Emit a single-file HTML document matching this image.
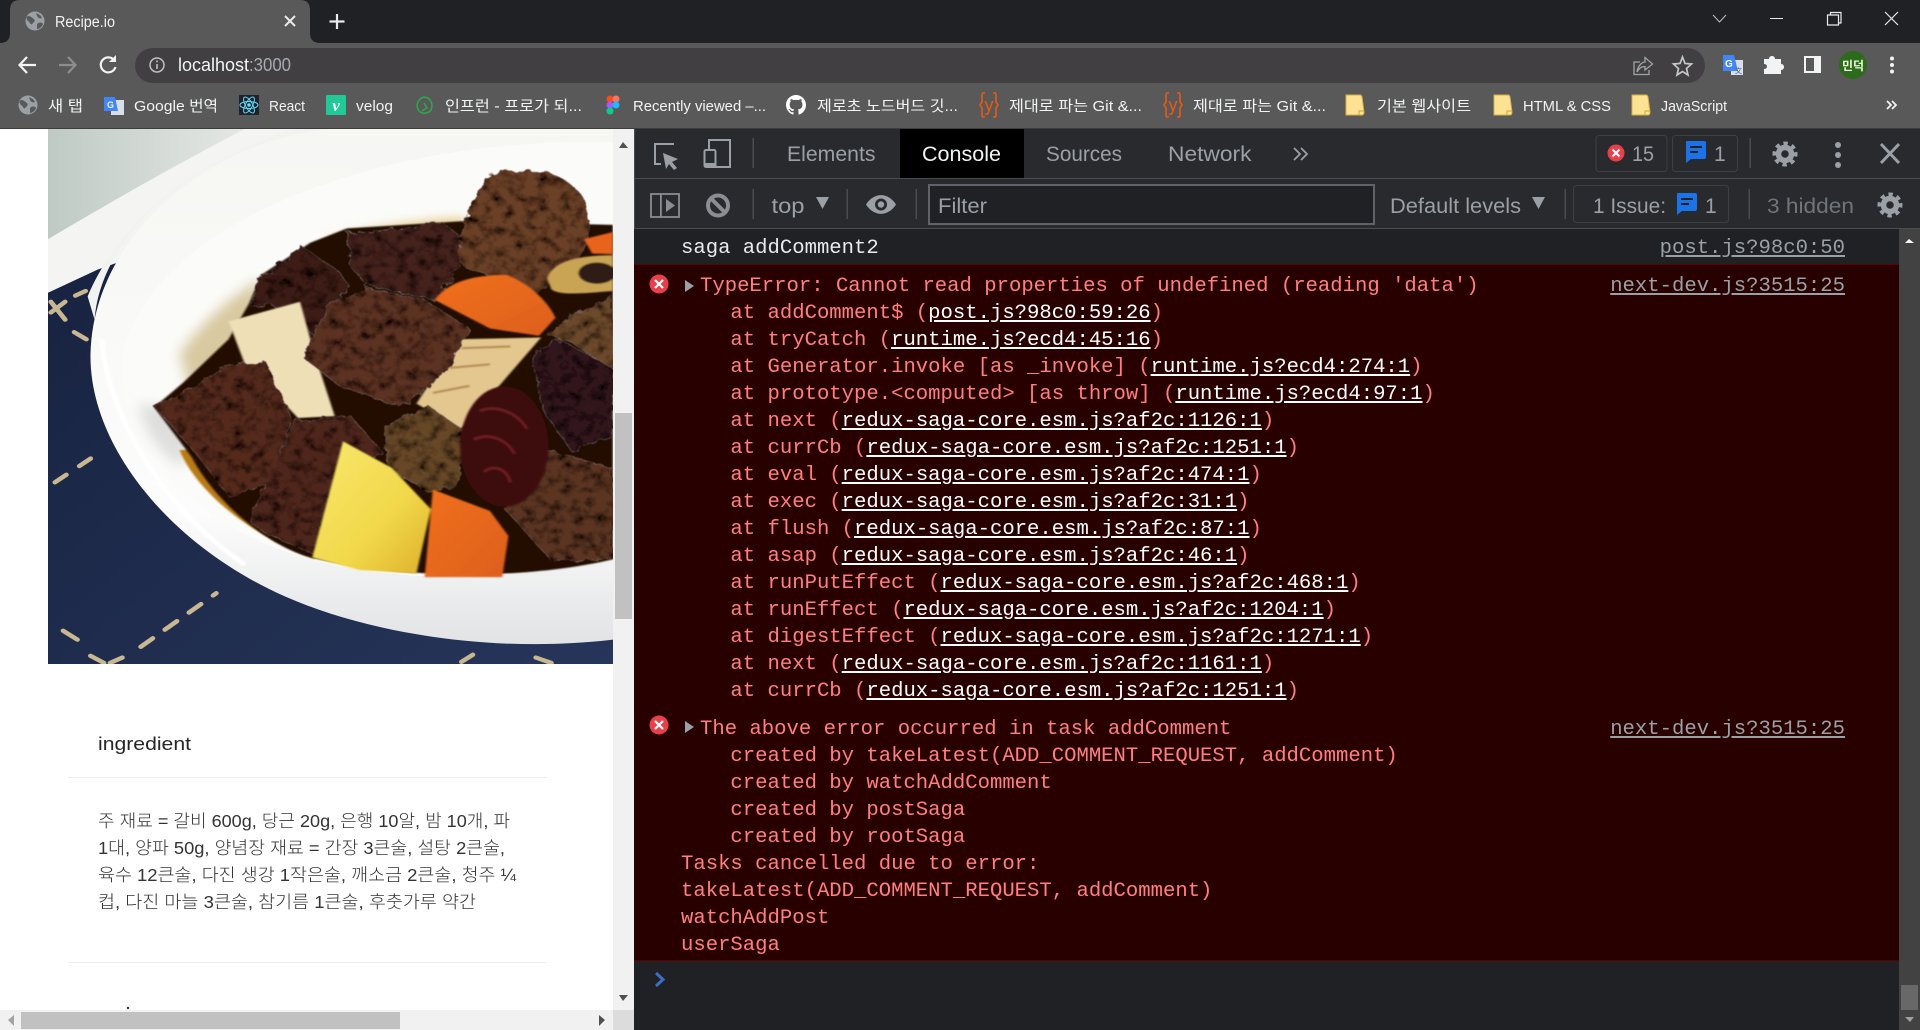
<!DOCTYPE html>
<html lang="ko">
<head>
<meta charset="utf-8">
<title>Recipe.io</title>
<style>
html,body{margin:0;padding:0;width:1920px;height:1030px;overflow:hidden;background:#202124}
body{position:relative;font-family:"Liberation Sans","Noto Sans CJK KR",sans-serif}
svg{position:absolute;display:block;overflow:hidden}
svg text{font-family:"Liberation Sans","Noto Sans CJK KR",sans-serif}
.abs{position:absolute}
#page{left:0;top:129px;width:634px;height:901px;background:#fff}
#console{left:634px;top:229px;width:1265px;height:801px;background:#202124}
.err{position:absolute;left:0;width:1265px;background:#290000;border-bottom:1px solid #5c0000}
pre{position:absolute;margin:0;font:20.6px/27px "Liberation Mono",monospace;white-space:pre;color:#ff8080}
pre a{color:#fff;text-decoration:underline}
.src{position:absolute;right:54px;font:20.6px/27px "Liberation Mono",monospace;color:#9aa0a6;text-decoration:underline;white-space:pre}
</style>
</head>
<body>

<!-- page area -->
<div id="page" class="abs">
<svg style="left:48px;top:0" width="565" height="535" viewBox="118 12 1383 1496" preserveAspectRatio="none">
<defs>
<linearGradient id="wall" gradientUnits="userSpaceOnUse" x1="118" y1="100" x2="640" y2="100"><stop offset="0" stop-color="#bfcac4"/><stop offset="1" stop-color="#e8eae7"/></linearGradient>
<linearGradient id="bowl" x1="0" y1="0" x2="0" y2="1"><stop offset="0" stop-color="#f6f6f3"/><stop offset=".75" stop-color="#fcfcfc"/><stop offset="1" stop-color="#e2e3e5"/></linearGradient>
<linearGradient id="cloth" x1="0" y1="0" x2="1" y2="1"><stop offset="0" stop-color="#17223f"/><stop offset="1" stop-color="#26355a"/></linearGradient>
<linearGradient id="pot" x1="0" y1="0" x2="1" y2="1"><stop offset="0" stop-color="#f8e86e"/><stop offset=".6" stop-color="#f2d84a"/><stop offset="1" stop-color="#dcb02a"/></linearGradient>
<linearGradient id="car" x1="0" y1="0" x2="1" y2="1"><stop offset="0" stop-color="#f0701e"/><stop offset="1" stop-color="#dd5f1c"/></linearGradient>
<filter id="meat" x="-8%" y="-8%" width="116%" height="116%">
<feTurbulence type="fractalNoise" baseFrequency=".035" numOctaves="5" seed="7" result="n"/>
<feDisplacementMap in="SourceGraphic" in2="n" scale="22" result="d"/>
<feColorMatrix in="n" type="matrix" values="2.2 0 0 0 -.3  2.2 0 0 0 -.3  2.2 0 0 0 -.3  0 0 0 0 1" result="m"/>
<feBlend in="m" in2="d" mode="multiply" result="b"/>
<feComposite in="b" in2="d" operator="in"/>
<feGaussianBlur stdDeviation="1.6"/>
</filter>
<filter id="soft" x="-10%" y="-10%" width="120%" height="120%"><feGaussianBlur stdDeviation="2.5"/></filter>
<filter id="blur" x="-30%" y="-30%" width="160%" height="160%"><feGaussianBlur stdDeviation="16"/></filter>
</defs>
<rect x="118" y="12" width="1383" height="1496" fill="url(#wall)"/>
<path d="M118,320C280,210 450,100 600,12L1000,12L240,420L118,470Z" fill="#f4f4f2"/>
<path d="M118,470L240,405L500,300L1501,1200L1501,1508L118,1508Z" fill="url(#cloth)"/>
<path d="M800,12C520,50 230,300 222,640C218,900 420,1180 700,1320C900,1420 1200,1480 1501,1440L1501,12Z" fill="url(#bowl)"/>
<path d="M215,480C300,250 500,90 720,12L800,12C520,50 250,280 232,545Z" fill="#f2f2f0"/>
<path d="M1501,50C960,30 380,260 300,640C270,880 480,1130 760,1215C1000,1290 1300,1270 1501,1215Z" fill="#fbfbf9"/>
<path d="M250,600C260,800 400,1080 600,1230" fill="none" stroke="#ffffff" stroke-width="12" filter="url(#soft)"/>
<path d="M340,780C350,860 400,930 450,960L480,800Z" fill="#dedfdc" filter="url(#blur)"/>
<path d="M440,640C500,540 580,470 640,430L620,640L470,760Z" fill="#d8c9a0" filter="url(#blur)"/>
<path d="M800,330C900,290 1050,270 1140,265L1140,320L820,360Z" fill="#d8b860" filter="url(#blur)"/>
<path d="M440,910C480,1020 600,1140 770,1215L800,1000L560,900Z" fill="#b87a18" filter="url(#soft)"/>
<path d="M378,790L450,720L560,600L610,500L640,420L760,330L850,290L1130,270L1501,280L1501,1215C1300,1270 1000,1275 760,1210C640,1170 520,1040 470,930Z" fill="#241006" filter="url(#soft)"/>
<g filter="url(#meat)">
<path d="M1120,375C1130,260 1170,160 1220,125L1340,130C1400,160 1445,200 1442,260L1430,350L1320,470L1140,400Z" fill="#6a4028"/>
<path d="M850,300L1000,290L1075,265L1125,310L1120,410L1060,490L900,450L860,400Z" fill="#44221a"/>
<path d="M610,510L630,430L740,340L830,410L855,450L770,590L660,500Z" fill="#3e1e18"/>
<path d="M1340,590L1420,520L1501,480L1501,690L1400,610Z" fill="#6c4a2a"/>
</g>
<g filter="url(#soft)">
<path d="M560,550L735,495L770,640L820,815L730,820L680,760L600,670Z" fill="#eedfb6"/>
<path d="M1020,780L1120,600L1325,595L1230,720L1130,850Z" fill="#e3c78f"/>
<path d="M1130,625L1250,620M1100,680L1200,670M1060,750L1150,730" stroke="#b58a50" stroke-width="6" fill="none"/>
<path d="M1340,430C1350,390 1400,365 1501,365L1501,465C1440,470 1370,480 1350,460Z" fill="#caa455"/>
<ellipse cx="1462" cy="415" rx="46" ry="30" fill="#2e1f12"/>
<path d="M1065,490C1090,450 1140,420 1240,420C1290,440 1340,490 1360,540L1320,590L1200,570Z" fill="url(#car)"/>
<path d="M1430,320L1501,300L1501,362L1450,360Z" fill="#e8641c"/>
</g>
<g filter="url(#meat)">
<path d="M740,650L800,510L900,455L1040,490L1150,570L1090,700L980,790L830,730Z" fill="#5c3020"/>
<path d="M378,790L560,670L650,660L715,820L660,1000L560,1040L480,920Z" fill="#552a1a"/>
<path d="M610,1110L720,830L860,815L940,920L820,1000L770,1200L660,1150Z" fill="#50261a"/>
<path d="M940,840L1050,785L1130,850L1130,1000L1050,1030L950,960Z" fill="#664626"/>
<path d="M1240,1080L1340,910L1501,960L1501,1215L1350,1220Z" fill="#5c3420"/>
<path d="M1300,640L1370,600L1500,680L1500,870L1400,915L1330,800Z" fill="#32181a"/>
</g>
<g filter="url(#soft)">
<path d="M765,1210L840,885L960,960L1055,1075L1020,1255L880,1245Z" fill="url(#pot)"/>
<path d="M1040,1265L1060,1020L1200,1080L1245,1150L1230,1265Z" fill="url(#car)"/>
<ellipse cx="1235" cy="900" rx="108" ry="168" fill="#3c0c10"/>
<path d="M1175,800C1220,780 1270,810 1290,850M1160,880C1200,860 1240,880 1260,920M1185,970C1210,950 1240,960 1250,1000" fill="none" stroke="#6e1e24" stroke-width="7"/>
</g>
<g fill="none" stroke="#c9b792" stroke-width="12" stroke-linecap="round">
<path d="M125,495L160,545M125,525L160,495M182,580L212,600M210,465L185,478"/>
<path d="M135,1000L240,920" stroke-dasharray="35 40"/>
<path d="M345,1460L530,1310" stroke-dasharray="38 38"/>
<path d="M155,1415L190,1440M222,1485L255,1505M270,1505L300,1490M1130,1502L1158,1482M1312,1490L1350,1505"/>
</g>
</svg>
<svg style="left:0;top:641px" width="613" height="260" viewBox="0 0 613 260">
<rect x="68" y="7" width="479" height="1" fill="#eeeeee"/>
<rect x="68" y="192" width="479" height="1" fill="#eeeeee"/>
<g fill="#333" font-size="17.5" font-weight="300">
<text x="98" y="57" textLength="412" lengthAdjust="spacingAndGlyphs">주 재료 = 갈비 600g, 당근 20g, 은행 10알, 밤 10개, 파</text>
<text x="98" y="84" textLength="407" lengthAdjust="spacingAndGlyphs">1대, 양파 50g, 양념장 재료 = 간장 3큰술, 설탕 2큰술,</text>
<text x="98" y="111" textLength="418" lengthAdjust="spacingAndGlyphs">육수 12큰술, 다진 생강 1작은술, 깨소금 2큰술, 청주 ¼</text>
<text x="98" y="138" textLength="378" lengthAdjust="spacingAndGlyphs">컵, 다진 마늘 3큰술, 참기름 1큰술, 후춧가루 약간</text>
</g>
<circle cx="128" cy="238" r="1.2" fill="#333"/>
</svg>
<svg style="left:0;top:0" width="634" height="901" viewBox="0 0 634 901">
<text x="98" y="621" font-size="18.5" fill="#262626" textLength="93" lengthAdjust="spacingAndGlyphs">ingredient</text>
<rect x="613" y="0" width="21" height="901" fill="#f1f1f1"/>
<rect x="615" y="284" width="17" height="206" fill="#c1c1c1"/>
<path d="M619,19L623,13L628,19Z" fill="#505050"/>
<path d="M619,866L623,872L628,866Z" fill="#505050"/>
<rect x="0" y="881" width="613" height="20" fill="#f1f1f1"/>
<rect x="21" y="883" width="379" height="17" fill="#c1c1c1"/>
<path d="M14,886L8,891L14,897Z" fill="#a3a3a3"/>
<path d="M599,886L605,891L599,897Z" fill="#505050"/>
<rect x="613" y="881" width="21" height="20" fill="#dcdcdc"/>
</svg>
</div>

<!-- console -->
<div id="console" class="abs">
  <pre style="left:47px;top:6px;color:#e8eaed">saga addComment2</pre>
  <span class="src" style="top:6px">post.js?98c0:50</span>
  <div class="err" style="top:35px;height:442px;border-top:1px solid #5c0000"></div>
  <div class="err" style="top:478px;height:253px"></div>
  <pre style="left:66px;top:44px">TypeError: Cannot read properties of undefined (reading 'data')</pre>
  <span class="src" style="top:44px">next-dev.js?3515:25</span>
  <pre style="left:47px;top:71px">    at addComment$ (<a>post.js?98c0:59:26</a>)
    at tryCatch (<a>runtime.js?ecd4:45:16</a>)
    at Generator.invoke [as _invoke] (<a>runtime.js?ecd4:274:1</a>)
    at prototype.&lt;computed&gt; [as throw] (<a>runtime.js?ecd4:97:1</a>)
    at next (<a>redux-saga-core.esm.js?af2c:1126:1</a>)
    at currCb (<a>redux-saga-core.esm.js?af2c:1251:1</a>)
    at eval (<a>redux-saga-core.esm.js?af2c:474:1</a>)
    at exec (<a>redux-saga-core.esm.js?af2c:31:1</a>)
    at flush (<a>redux-saga-core.esm.js?af2c:87:1</a>)
    at asap (<a>redux-saga-core.esm.js?af2c:46:1</a>)
    at runPutEffect (<a>redux-saga-core.esm.js?af2c:468:1</a>)
    at runEffect (<a>redux-saga-core.esm.js?af2c:1204:1</a>)
    at digestEffect (<a>redux-saga-core.esm.js?af2c:1271:1</a>)
    at next (<a>redux-saga-core.esm.js?af2c:1161:1</a>)
    at currCb (<a>redux-saga-core.esm.js?af2c:1251:1</a>)</pre>
  <pre style="left:66px;top:487px">The above error occurred in task addComment</pre>
  <span class="src" style="top:487px">next-dev.js?3515:25</span>
  <pre style="left:47px;top:514px">    created by takeLatest(ADD_COMMENT_REQUEST, addComment)
    created by watchAddComment
    created by postSaga
    created by rootSaga
Tasks cancelled due to error:
takeLatest(ADD_COMMENT_REQUEST, addComment)
watchAddPost
userSaga</pre>
</div>

<svg style="left:634px;top:229px" width="1286" height="801" viewBox="634 229 1286 801">
<circle cx="659" cy="284" r="9.5" fill="#e8404a"/><path d="M655,280L663,288M663,280L655,288" stroke="#fff" stroke-width="2.2"/>
<circle cx="659" cy="725" r="9.5" fill="#e8404a"/><path d="M655,721L663,729M663,721L655,729" stroke="#fff" stroke-width="2.2"/>
<path d="M685,280L694,286L685,292Z" fill="#9aa0a6"/>
<path d="M685,721L694,727L685,733Z" fill="#9aa0a6"/>
<path d="M656,973L663,979.5L656,986" fill="none" stroke="#3a6fc4" stroke-width="3"/>
<rect x="1899" y="229" width="21" height="801" fill="#424242"/>
<path d="M1905,243L1909,239L1914,243Z" fill="#fff"/>
<rect x="1901" y="985" width="17" height="25" fill="#686868"/>
<path d="M1905,1017L1910,1022L1914,1017Z" fill="#a0a0a0"/>
</svg>

<!-- chrome + devtools toolbars -->
<svg style="left:0;top:0" width="1920" height="129" viewBox="0 0 1920 129">
<defs>
<g id="globe"><circle r="9.5" fill="#9aa0a6"/><path d="M-7,-5C-4,-5 -3,-3 -1,-2C1,0 -2,2 -3,3C-4,5 -5,1 -7,0C-9,-2 -9,-4 -7,-5ZM1,-8C3,-7 6,-6 7,-3C5,-2 3,-3 2,-5ZM2,3C4,1 7,1 8,3C7,6 4,8 2,8Z" fill="#595959"/></g>
<g id="folder"><path d="M-9,-10L5,-10Q6.5,-10 7,-8L9,7Q9,10 7,10L-9,10Z" fill="#fde293" stroke="#d6b042" stroke-width="1"/><path d="M4,10L4,6L9,6" fill="none" stroke="#d6b042" stroke-width="1.2"/></g>
<g id="yy"><text x="0" y="6" font-size="18" text-anchor="middle" fill="#ea5a12" font-family="Liberation Sans">y</text><path d="M-4,-12L-6,-12Q-7,-12 -7,-10L-7,-3L-9,0L-7,3L-7,10Q-7,12 -6,12L-4,12M4,-12L6,-12Q7,-12 7,-10L7,-3L9,0L7,3L7,10Q7,12 6,12L4,12" fill="none" stroke="#ea5a12" stroke-width="1.6"/></g>
<g id="gear"><circle r="6.5" fill="none" stroke="#9aa0a6" stroke-width="5.5"/><circle r="10.5" fill="none" stroke="#9aa0a6" stroke-width="4" stroke-dasharray="4.2 4.05" transform="rotate(-10)"/></g>
<g id="chat"><path d="M-9,-10Q-10,-10 -10,-9L-10,12L-5,8L8,8Q10,8 10,6L10,-8Q10,-10 8,-10Z" fill="#1a73e8"/><rect x="-6" y="-5" width="12" height="2" fill="#202124"/><rect x="-6" y="0" width="8" height="2" fill="#202124"/></g>
</defs>
<rect width="1920" height="43" fill="#202124"/>
<rect y="43" width="1920" height="85" fill="#595959"/>
<rect y="128" width="1920" height="1" fill="#3c3c3c"/>
<path d="M0,43Q10,43 10,33L10,10Q10,0 20,0L300,0Q310,0 310,10L310,33Q310,43 320,43Z" fill="#595959"/>
<use href="#globe" x="35" y="21"/>
<text x="55" y="27" font-size="15.5" fill="#f1f3f4" textLength="60" lengthAdjust="spacingAndGlyphs">Recipe.io</text>
<path d="M285,16L295,26M295,16L285,26" stroke="#e8eaed" stroke-width="2"/>
<path d="M337,14V29M329.500,21.500H344.500" stroke="#e8eaed" stroke-width="2.200"/>
<!-- window controls -->
<path d="M1713,15L1719.500,22L1726,15" fill="none" stroke="#bdc1c6" stroke-width="1"/>
<rect x="1770" y="18" width="13" height="1" fill="#e8eaed"/>
<path d="M1827.500,15V25H1838.500V15ZM1830.500,15V12.500H1841V23H1838.500" fill="none" stroke="#e8eaed" stroke-width="1.200"/>
<path d="M1885,12L1898,25M1898,12L1885,25" stroke="#e8eaed" stroke-width="1.200"/>
<!-- toolbar -->
<path d="M36,65H20M27,57L19.500,65L27,73" fill="none" stroke="#f1f3f4" stroke-width="2.200"/>
<path d="M59,65H75M68,57L75.500,65L68,73" fill="none" stroke="#8d8d8d" stroke-width="2.200"/>
<path d="M114,60A7.500,7.500 0 1 0 115.500,67" fill="none" stroke="#f1f3f4" stroke-width="2.200"/>
<path d="M109,62H116V55Z" fill="#f1f3f4"/>
<rect x="135" y="48" width="1570" height="35" rx="17.5" fill="#413f42"/>
<circle cx="157" cy="65" r="7" fill="none" stroke="#bdc1c6" stroke-width="1.500"/>
<rect x="156.200" y="64" width="1.600" height="5" fill="#bdc1c6"/><rect x="156.200" y="60.500" width="1.600" height="1.800" fill="#bdc1c6"/>
<text x="178" y="71" font-size="18" fill="#f1f3f4" textLength="71" lengthAdjust="spacingAndGlyphs">localhost</text>
<text x="249" y="71" font-size="18" fill="#a8abb0" textLength="42" lengthAdjust="spacingAndGlyphs">:3000</text>
<path d="M1640,62H1634V74.500H1649V70" fill="none" stroke="#a0a3a8" stroke-width="1.300"/>
<path d="M1637,72C1638,65 1642.500,62 1645,62V57.500L1652.500,64L1645,70V66.500C1641,66.500 1639,68.500 1637,72Z" fill="none" stroke="#a0a3a8" stroke-width="1.300"/>
<path d="M1682.500,57L1685,63.500L1691.500,64L1686.500,68.500L1688,75L1682.500,71.500L1677,75L1678.500,68.500L1673.500,64L1680,63.500Z" fill="none" stroke="#c4c7ca" stroke-width="1.700"/>
<rect x="1731" y="60" width="12" height="15" fill="#d8dfe6"/>
<path d="M1723,55H1734L1738,71H1723Z" fill="#4285f4"/>
<text x="1725" y="67" font-size="10" font-weight="bold" fill="#fff">G</text>
<text x="1735" y="73" font-size="7" fill="#3a5a88">文</text>
<path d="M1764,59H1769C1769,55 1775,55 1775,59H1781V64C1785,64 1785,70 1781,70V74H1764V69C1768,69 1768,64 1764,64Z" fill="#f1f3f4"/>
<rect x="1804" y="56" width="17" height="17" fill="#f1f3f4"/>
<rect x="1806" y="58" width="8" height="13" fill="#595959"/>
<circle cx="1853" cy="65" r="14" fill="#2c6a1c"/>
<text x="1853" y="70" font-size="12" font-weight="bold" fill="#e8f5d8" text-anchor="middle">민덕</text>
<circle cx="1892" cy="58.500" r="2" fill="#f1f3f4"/><circle cx="1892" cy="65" r="2" fill="#f1f3f4"/><circle cx="1892" cy="71.500" r="2" fill="#f1f3f4"/>
<!-- bookmarks -->
<g fill="#f1f3f4" font-size="15">
<use href="#globe" x="28" y="105"/>
<text x="48" y="111" textLength="35" lengthAdjust="spacingAndGlyphs">새 탭</text>
<rect x="111" y="100" width="13" height="15" fill="#d8dfe6"/>
<path d="M104,97H115L118,111H104Z" fill="#4285f4"/>
<text x="107" y="108" font-size="9" font-weight="bold">G</text>
<text x="134" y="111" textLength="84" lengthAdjust="spacingAndGlyphs">Google 번역</text>
<rect x="239" y="95" width="20" height="20" fill="#20232a"/>
<g fill="none" stroke="#61dafb" stroke-width="1"><ellipse cx="249" cy="105" rx="9" ry="3.500"/><ellipse cx="249" cy="105" rx="9" ry="3.500" transform="rotate(60 249 105)"/><ellipse cx="249" cy="105" rx="9" ry="3.500" transform="rotate(120 249 105)"/></g>
<circle cx="249" cy="105" r="1.800" fill="#61dafb"/>
<text x="269" y="111" textLength="36" lengthAdjust="spacingAndGlyphs">React</text>
<rect x="326" y="95" width="20" height="20" rx="1.500" fill="#20c997"/>
<text x="336" y="111" font-size="17" font-weight="bold" font-style="italic" text-anchor="middle" style="font-family:'Liberation Serif',serif" fill="#fff">v</text>
<text x="356" y="111" textLength="37" lengthAdjust="spacingAndGlyphs">velog</text>
<path d="M424,97C432,98 433,105 431,110C428,114 422,114 419,111C415,105 418,99 424,97ZM424,103L427,108L422,111" fill="none" stroke="#2ea84a" stroke-width="1.500"/>
<text x="445" y="111" textLength="137" lengthAdjust="spacingAndGlyphs">인프런 - 프로가 되...</text>
<circle cx="610" cy="99" r="3.500" fill="#f24e1e"/><circle cx="616" cy="99" r="3.500" fill="#ff7262"/><circle cx="610" cy="105" r="3.500" fill="#a259ff"/><circle cx="616" cy="105" r="3.500" fill="#1abcfe"/><circle cx="610" cy="111" r="3.500" fill="#0acf83"/>
<text x="633" y="111" textLength="133" lengthAdjust="spacingAndGlyphs">Recently viewed –...</text>
<path transform="translate(786,95) scale(1.250)" fill="#fff" d="M8 0C3.58 0 0 3.58 0 8c0 3.54 2.29 6.530 5.470 7.590.4.07.55-.17.55-.38 0-.19-.01-.82-.01-1.490-2.010.37-2.530-.49-2.690-.94-.09-.23-.48-.94-.82-1.130-.28-.15-.68-.52-.01-.53.63-.01 1.080.58 1.230.82.72 1.210 1.870.87 2.330.66.07-.52.28-.87.51-1.070-1.780-.2-3.640-.89-3.640-3.950 0-.87.31-1.590.82-2.150-.08-.2-.36-1.020.08-2.120 0 0 .67-.21 2.200.82.64-.18 1.320-.27 2-.27.68 0 1.360.09 2 .27 1.530-1.040 2.200-.82 2.200-.82.44 1.100.16 1.920.08 2.120.51.56.82 1.270.82 2.150 0 3.070-1.870 3.750-3.650 3.950.29.25.54.73.54 1.480 0 1.070-.01 1.930-.01 2.200 0 .21.15.46.55.38A8.013 8.013 0 0016 8c0-4.420-3.580-8-8-8z"/>
<text x="817" y="111" textLength="141" lengthAdjust="spacingAndGlyphs">제로초 노드버드 깃...</text>
<use href="#yy" x="989" y="105"/>
<text x="1009" y="111" textLength="133" lengthAdjust="spacingAndGlyphs">제대로 파는 Git &amp;...</text>
<use href="#yy" x="1173" y="105"/>
<text x="1193" y="111" textLength="133" lengthAdjust="spacingAndGlyphs">제대로 파는 Git &amp;...</text>
<use href="#folder" x="1355" y="105"/>
<text x="1377" y="111" textLength="94" lengthAdjust="spacingAndGlyphs">기본 웹사이트</text>
<use href="#folder" x="1503" y="105"/>
<text x="1523" y="111" textLength="88" lengthAdjust="spacingAndGlyphs">HTML &amp; CSS</text>
<use href="#folder" x="1641" y="105"/>
<text x="1661" y="111" textLength="66" lengthAdjust="spacingAndGlyphs">JavaScript</text>
<path d="M1887,101L1891,105L1887,109M1892,101L1896,105L1892,109" fill="none" stroke="#f1f3f4" stroke-width="1.800"/>
</g>
</svg>

<svg style="left:634px;top:129px" width="1286" height="100" viewBox="634 129 1286 100">
<rect x="634" y="129" width="1286" height="100" fill="#292a2d"/>
<rect x="634" y="129" width="1" height="901" fill="#494c50"/>
<rect x="634" y="178" width="1286" height="1" fill="#494c50"/>
<rect x="634" y="228" width="1286" height="1" fill="#494c50"/>
<!-- inspect -->
<path d="M674,144H655V164H661" fill="none" stroke="#9aa0a6" stroke-width="2"/>
<path d="M663,153L678,159L672,162L677,168L674,170L669,164L666,169Z" fill="#9aa0a6"/>
<!-- device -->
<path d="M709,150V140H730V167H707" fill="none" stroke="#9aa0a6" stroke-width="2"/>
<rect x="704.500" y="150" width="11" height="17" rx="1.500" fill="none" stroke="#9aa0a6" stroke-width="2"/>
<rect x="705" y="163" width="10" height="3" fill="#9aa0a6"/>
<rect x="752.500" y="138" width="1.500" height="30" fill="#494c50"/>
<rect x="900" y="129" width="124" height="49" fill="#000"/>
<g font-size="21">
<text x="787" y="161" fill="#9aa0a6" textLength="88.500" lengthAdjust="spacingAndGlyphs">Elements</text>
<text x="922" y="161" fill="#f1f3f4" textLength="79" lengthAdjust="spacingAndGlyphs">Console</text>
<text x="1046" y="161" fill="#9aa0a6" textLength="76" lengthAdjust="spacingAndGlyphs">Sources</text>
<text x="1168" y="161" fill="#9aa0a6" textLength="83.500" lengthAdjust="spacingAndGlyphs">Network</text>
</g>
<path d="M1294,148L1300,154L1294,160M1301,148L1307,154L1301,160" fill="none" stroke="#9aa0a6" stroke-width="1.800"/>
<!-- counters -->
<rect x="1596" y="135.500" width="71" height="36" rx="3" fill="none" stroke="#3c4043"/>
<rect x="1672.500" y="135.500" width="65" height="36" rx="3" fill="none" stroke="#3c4043"/>
<circle cx="1616" cy="153" r="8.500" fill="#e8404a"/>
<path d="M1612.500,149.500L1619.500,156.500M1619.500,149.500L1612.500,156.500" stroke="#fff" stroke-width="2"/>
<text x="1632" y="161" font-size="21" fill="#9aa0a6" textLength="22" lengthAdjust="spacingAndGlyphs">15</text>
<use href="#chat" x="1696" y="151"/>
<text x="1714" y="161" font-size="21" fill="#9aa0a6">1</text>
<rect x="1749.500" y="138" width="1.500" height="30" fill="#494c50"/>
<use href="#gear" x="1785" y="154"/>
<circle cx="1838" cy="145" r="3" fill="#9aa0a6"/><circle cx="1838" cy="155" r="3" fill="#9aa0a6"/><circle cx="1838" cy="165" r="3" fill="#9aa0a6"/>
<path d="M1881,144L1899,163M1899,144L1881,163" stroke="#9aa0a6" stroke-width="3"/>
<!-- second row -->
<rect x="651" y="194" width="28" height="23" fill="none" stroke="#8a8d91" stroke-width="1.800"/>
<rect x="660" y="194" width="1.800" height="23" fill="#8a8d91"/>
<path d="M666,199L675,205.500L666,212Z" fill="#8a8d91"/>
<circle cx="718" cy="205.500" r="10" fill="none" stroke="#8a8d91" stroke-width="4"/>
<path d="M711,198.500L725,212.500" stroke="#8a8d91" stroke-width="4"/>
<rect x="752.500" y="189" width="1.500" height="30" fill="#494c50"/>
<text x="771.500" y="213" font-size="21" fill="#9aa0a6" textLength="33" lengthAdjust="spacingAndGlyphs">top</text>
<path d="M816,197H829L822.500,209Z" fill="#9aa0a6"/>
<rect x="846.500" y="189" width="1.500" height="30" fill="#494c50"/>
<path d="M866,204.500C874,192 888,192 896,204.500C888,217 874,217 866,204.500Z" fill="#9aa0a6"/>
<circle cx="881" cy="204.500" r="6" fill="#292a2d"/><circle cx="881" cy="204.500" r="3.200" fill="#9aa0a6"/>
<rect x="915.500" y="189" width="1.500" height="30" fill="#494c50"/>
<rect x="929" y="185" width="445" height="39" fill="#202124" stroke="#5f6368" stroke-width="2"/>
<text x="938" y="213" font-size="21" fill="#9aa0a6" textLength="49" lengthAdjust="spacingAndGlyphs">Filter</text>
<text x="1390" y="213" font-size="21" fill="#9aa0a6" textLength="131" lengthAdjust="spacingAndGlyphs">Default levels</text>
<path d="M1532,197H1545L1538.500,209Z" fill="#9aa0a6"/>
<rect x="1564.500" y="189" width="1.500" height="30" fill="#494c50"/>
<rect x="1573.500" y="185.500" width="155" height="37" rx="3" fill="none" stroke="#3c4043"/>
<text x="1593" y="213" font-size="21" fill="#9aa0a6" textLength="73" lengthAdjust="spacingAndGlyphs">1 Issue:</text>
<use href="#chat" x="1687" y="203"/>
<text x="1705" y="213" font-size="21" fill="#9aa0a6">1</text>
<rect x="1748.500" y="189" width="1.500" height="30" fill="#494c50"/>
<text x="1767" y="213" font-size="21" fill="#70757a" textLength="87" lengthAdjust="spacingAndGlyphs">3 hidden</text>
<use href="#gear" x="1890" y="205"/>
</svg>

</body>
</html>
